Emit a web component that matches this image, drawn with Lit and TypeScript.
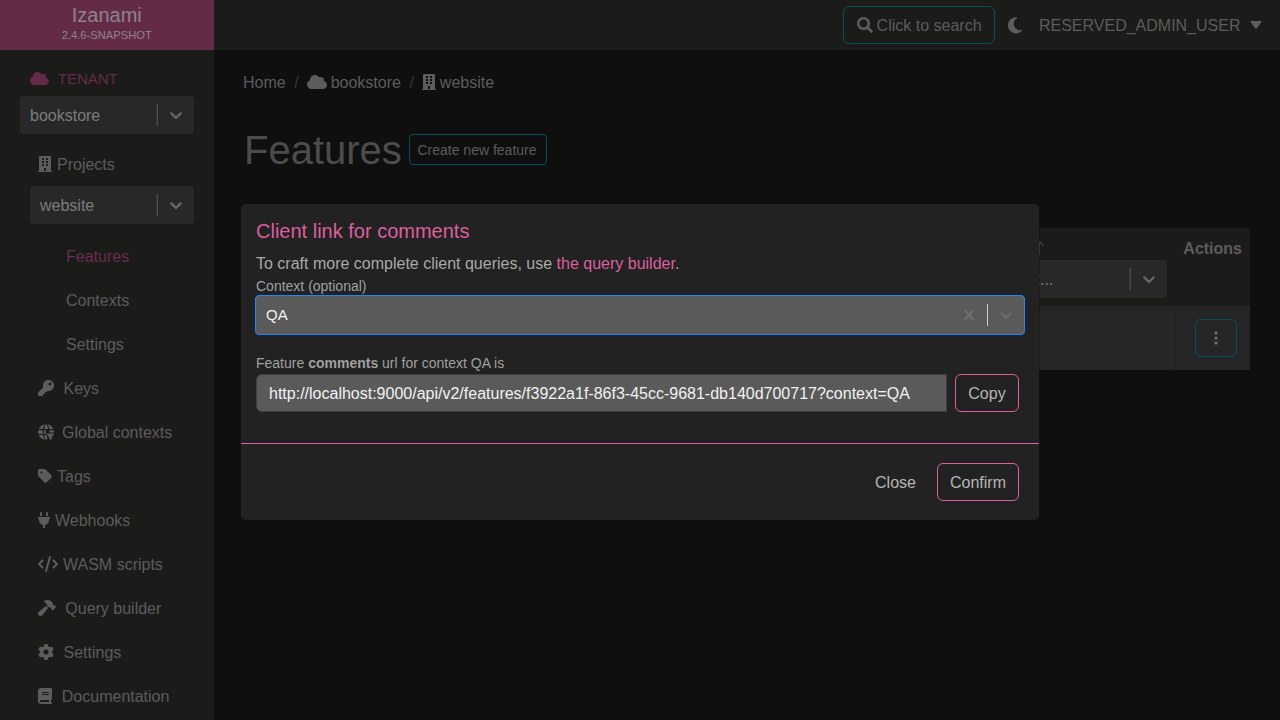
import { LitElement, html, css, svg } from "lit";
import { customElement, property } from "lit/decorators.js";

type Icon = { w: number; h: number; d: string };

const ICONS: Record<string, Icon> = {
  cloud: { w: 640, h: 512, d: "M0 336c0 79.5 64.5 144 144 144l368 0c70.7 0 128-57.3 128-128c0-61.9-44-113.6-102.4-125.4c4.1-10.7 6.4-22.4 6.4-34.6c0-53-43-96-96-96c-19.7 0-38.1 6-53.3 16.2C367 64.2 315.3 32 256 32C167.6 32 96 103.6 96 192c0 2.7 .1 5.4 .2 8.1C40.2 219.8 0 273.2 0 336z" },
  building: { w: 448, h: 512, d: "M436 480h-20V24c0-13.255-10.745-24-24-24H56C42.745 0 32 10.745 32 24v456H12c-6.627 0-12 5.373-12 12v20h448v-20c0-6.627-5.373-12-12-12zM128 76c0-6.627 5.373-12 12-12h40c6.627 0 12 5.373 12 12v40c0 6.627-5.373 12-12 12h-40c-6.627 0-12-5.373-12-12V76zm0 96c0-6.627 5.373-12 12-12h40c6.627 0 12 5.373 12 12v40c0 6.627-5.373 12-12 12h-40c-6.627 0-12-5.373-12-12v-40zm52 148h-40c-6.627 0-12-5.373-12-12v-40c0-6.627 5.373-12 12-12h40c6.627 0 12 5.373 12 12v40c0 6.627-5.373 12-12 12zm76 160h-64v-84c0-6.627 5.373-12 12-12h40c6.627 0 12 5.373 12 12v84zm64-172c0 6.627-5.373 12-12 12h-40c-6.627 0-12-5.373-12-12v-40c0-6.627 5.373-12 12-12h40c6.627 0 12 5.373 12 12v40zm0-96c0 6.627-5.373 12-12 12h-40c-6.627 0-12-5.373-12-12v-40c0-6.627 5.373-12 12-12h40c6.627 0 12 5.373 12 12v40zm0-96c0 6.627-5.373 12-12 12h-40c-6.627 0-12-5.373-12-12V76c0-6.627 5.373-12 12-12h40c6.627 0 12 5.373 12 12v40z" },
  key: { w: 512, h: 512, d: "M512 176.001C512 273.203 433.202 352 336 352c-11.22 0-22.19-1.062-32.827-3.069l-24.012 27.014A23.999 23.999 0 0 1 261.223 384H224v40c0 13.255-10.745 24-24 24h-40v40c0 13.255-10.745 24-24 24H24c-13.255 0-24-10.745-24-24v-78.059c0-6.365 2.529-12.47 7.029-16.971l161.802-161.802C163.108 213.814 160 195.271 160 176 160 78.798 238.797.001 335.999 0 433.488-.001 512 78.511 512 176.001zM336 128c0 26.51 21.49 48 48 48s48-21.49 48-48-21.49-48-48-48-48 21.49-48 48z" },
  tag: { w: 448, h: 512, d: "M0 80V229.5c0 17 6.7 33.3 18.7 45.3l176 176c25 25 65.5 25 90.5 0L418.7 317.3c25-25 25-65.5 0-90.5l-176-176c-12-12-28.3-18.7-45.3-18.7H48C21.5 32 0 53.5 0 80zm112 32a32 32 0 1 1 0 64 32 32 0 1 1 0-64z" },
  plug: { w: 384, h: 512, d: "M320,32a32,32,0,0,0-64,0v96h64Zm48,128H16A16,16,0,0,0,0,176v32a16,16,0,0,0,16,16H32v32A160.07,160.07,0,0,0,160,412.8V512h64V412.8A160.07,160.07,0,0,0,352,256V224h16a16,16,0,0,0,16-16V176A16,16,0,0,0,368,160ZM128,32a32,32,0,0,0-64,0v96h64Z" },
  code: { w: 640, h: 512, d: "M392.8 1.2c-17-4.9-34.7 5-39.6 22l-128 448c-4.9 17 5 34.7 22 39.6s34.7-5 39.6-22l128-448c4.9-17-5-34.7-22-39.6zm80.6 120.1c-12.5 12.5-12.5 32.8 0 45.3L562.7 256l-89.4 89.4c-12.5 12.5-12.5 32.8 0 45.3s32.8 12.5 45.3 0l112-112c12.5-12.5 12.5-32.8 0-45.3l-112-112c-12.5-12.5-32.8-12.5-45.3 0zm-306.7 0c-12.5-12.5-32.8-12.5-45.3 0l-112 112c-12.5 12.5-12.5 32.8 0 45.3l112 112c12.5 12.5 32.8 12.5 45.3 0s12.5-32.8 0-45.3L77.3 256l89.4-89.4c12.5-12.5 12.5-32.8 0-45.3z" },
  hammer: { w: 576, h: 512, d: "M413.5 237.5c-28.2 4.8-58.2-3.6-80-25.4l-38.1-38.1C280.4 159 272 138.8 272 117.6V105.5L192.3 62c-5.3-2.9-8.6-8.6-8.3-14.7s3.9-11.5 9.5-14l47.2-21C259.1 4.2 279 0 299.2 0h18.1c36.7 0 72 14 98.7 39.1l44.6 42c24.2 22.8 33.2 55.7 26.6 86L503 183l8-8c9.4-9.4 24.6-9.4 33.9 0l24 24c9.4 9.4 9.4 24.6 0 33.9l-88 88c-9.4 9.4-24.6 9.4-33.9 0l-24-24c-9.4-9.4-9.4-24.6 0-33.9l8-8-17.5-17.5zM27.4 377.1L260.9 182.6c3.5 4.9 7.5 9.6 11.8 14l38.1 38.1c6 6 12.4 11.2 19.2 15.7L134.9 484.6c-14.5 17.4-36 27.4-58.6 27.4C34.1 512 0 477.8 0 435.7c0-22.6 10.1-44.1 27.4-58.6z" },
  gear: { w: 512, h: 512, d: "M495.9 166.6c3.2 8.7 .5 18.4-6.4 24.6l-43.3 39.4c1.1 8.3 1.7 16.8 1.7 25.4s-.6 17.1-1.7 25.4l43.3 39.4c6.9 6.2 9.6 15.9 6.4 24.6c-4.4 11.9-9.7 23.3-15.8 34.3l-4.7 8.1c-6.6 11-14 21.4-22.1 31.2c-5.9 7.2-15.7 9.6-24.5 6.8l-55.7-17.7c-13.4 10.3-28.2 18.9-44 25.4l-12.5 57.1c-2 9.1-9 16.3-18.2 17.8c-13.8 2.3-28 3.5-42.5 3.5s-28.7-1.2-42.5-3.5c-9.2-1.5-16.2-8.7-18.2-17.8l-12.5-57.1c-15.8-6.5-30.6-15.1-44-25.4L83.1 425.9c-8.8 2.8-18.6 .3-24.5-6.8c-8.1-9.8-15.5-20.2-22.1-31.2l-4.7-8.1c-6.1-11-11.4-22.4-15.8-34.3c-3.2-8.7-.5-18.4 6.4-24.6l43.3-39.4C64.6 273.1 64 264.6 64 256s.6-17.1 1.7-25.4L22.4 191.2c-6.9-6.2-9.6-15.9-6.4-24.6c4.4-11.9 9.7-23.3 15.8-34.3l4.7-8.1c6.6-11 14-21.4 22.1-31.2c5.9-7.2 15.7-9.6 24.5-6.8l55.7 17.7c13.4-10.3 28.2-18.9 44-25.4l12.5-57.1c2-9.1 9-16.3 18.2-17.8C227.3 1.2 241.5 0 256 0s28.7 1.2 42.5 3.5c9.2 1.5 16.2 8.7 18.2 17.8l12.5 57.1c15.8 6.5 30.6 15.1 44 25.4l55.7-17.7c8.8-2.8 18.6-.3 24.5 6.8c8.1 9.8 15.5 20.2 22.1 31.2l4.7 8.1c6.1 11 11.4 22.4 15.8 34.3zM256 336a80 80 0 1 0 0-160 80 80 0 1 0 0 160z" },
  book: { w: 448, h: 512, d: "M96 0C43 0 0 43 0 96V416c0 53 43 96 96 96H384h32c17.7 0 32-14.3 32-32s-14.3-32-32-32V384c17.7 0 32-14.3 32-32V32c0-17.7-14.3-32-32-32H384 96zm0 384H352v64H96c-17.7 0-32-14.3-32-32s14.3-32 32-32zm32-240c0-8.8 7.2-16 16-16H336c8.8 0 16 7.2 16 16s-7.2 16-16 16H144c-8.8 0-16-7.2-16-16zm16 48H336c8.8 0 16 7.2 16 16s-7.2 16-16 16H144c-8.8 0-16-7.2-16-16s7.2-16 16-16z" },
  search: { w: 512, h: 512, d: "M505 442.7L405.3 343c-4.5-4.5-10.6-7-17-7H372c27.6-35.3 44-79.7 44-128C416 93.1 322.9 0 208 0S0 93.1 0 208s93.1 208 208 208c48.3 0 92.7-16.4 128-44v16.3c0 6.4 2.5 12.5 7 17l99.7 99.7c9.4 9.4 24.6 9.4 33.9 0l28.3-28.3c9.4-9.4 9.4-24.6.1-34zM208 336c-70.7 0-128-57.2-128-128 0-70.7 57.2-128 128-128 70.7 0 128 57.2 128 128 0 70.7-57.2 128-128 128z" },
  moon: { w: 384, h: 512, d: "M223.5 32C100 32 0 132.3 0 256S100 480 223.5 480c60.6 0 115.5-24.2 155.8-63.4c5-4.9 6.3-12.5 3.1-18.7s-10.1-9.7-17-8.5c-9.8 1.7-19.8 2.6-30.1 2.6c-96.9 0-175.5-78.8-175.5-176c0-65.8 36-123.1 89.3-153.3c6.1-3.5 9.2-10.5 7.7-17.3s-7.3-11.9-14.3-12.5c-6.3-.5-12.6-.8-19-.8z" },
  chevron: { w: 20, h: 20, d: "M4.516 7.548c0.436-0.446 1.043-0.481 1.576 0l3.908 3.747 3.908-3.747c0.533-0.481 1.141-0.446 1.574 0 0.436 0.445 0.408 1.197 0 1.615-0.406 0.418-4.695 4.502-4.695 4.502-0.217 0.223-0.502 0.335-0.787 0.335s-0.57-0.112-0.789-0.335c0 0-4.287-4.084-4.695-4.502s-0.436-1.17 0-1.615z" },
  cross: { w: 20, h: 20, d: "M14.348 14.849c-0.469 0.469-1.229 0.469-1.697 0l-2.651-3.030-2.651 3.029c-0.469 0.469-1.229 0.469-1.697 0-0.469-0.469-0.469-1.229 0-1.697l2.758-3.15-2.759-3.152c-0.469-0.469-0.469-1.228 0-1.697s1.228-0.469 1.697 0l2.652 3.031 2.651-3.031c0.469-0.469 1.228-0.469 1.697 0s0.469 1.229 0 1.697l-2.758 3.152 2.758 3.15c0.469 0.469 0.469 1.229 0 1.698z" },
  dots: { w: 16, h: 16, d: "M9.5 13a1.5 1.5 0 1 1-3 0 1.5 1.5 0 0 1 3 0m0-5a1.5 1.5 0 1 1-3 0 1.5 1.5 0 0 1 3 0m0-5a1.5 1.5 0 1 1-3 0 1.5 1.5 0 0 1 3 0" },
  caret: { w: 12, h: 8, d: "M1 0H11Q12.4 0 11.4 1.2L7 7Q6 8.2 5 7L.6 1.2Q-.4 0 1 0z" },
};

@customElement("ui-icon")
class UiIcon extends LitElement {
  @property() name = "";
  @property({ type: Number }) size = 16;

  static styles = css`
    :host { display: inline-flex; flex: none; }
    svg { display: block; fill: currentColor; }
  `;

  render() {
    if (this.name === "globe") {
      return html`<svg width="16" height="16" viewBox="0 0 16 16">
        ${svg`<path d="M5 5.1C5.4 2.7 6.2.9 7.2.3 4.3.6 1.9 2.3.8 5.1zM6.2 5.1h3.9C9.8 2.4 9 .4 8.1.4S6.5 2.4 6.2 5.1zM11.3 5.1h4C14.3 2.5 12.2.7 9.5.3c.9 1 1.5 2.700 1.800 4.800zM.4 6.200C.1 7.400.1 8.700.4 9.900h4.400c-.1-1.200-.1-2.500 0-3.700zM6 6.200c-.1 1.300-.1 2.500 0 3.700h1.700V7.600c0-.7.4-1.200 1-1.400zM.8 11.100c1.100 2.600 3.300 4.300 6.300 4.700-1-1-1.700-2.600-2.100-4.700zM6.200 11.100c.3 2.600 1.100 4.700 2 4.700.5 0 .9-.6 1.200-1.500L8.500 11.100zM11.500 6.200c.1.800.1 1.500.1 2.200h4.200c.1-.8 0-1.500-.2-2.200zM9 9.600h6.500q.8.100.4.900L13.700 13v2.400q-.3.700-.9.300L11 14.200V13L8.800 10.500Q8.400 9.800 9 9.600z"/>`}
      </svg>`;
    }
    const i = ICONS[this.name];
    if (!i) return html``;
    return html`<svg width=${(this.size * i.w) / i.h} height=${this.size} viewBox="0 0 ${i.w} ${i.h}">${svg`<path d=${i.d}/>`}</svg>`;
  }
}

@customElement("ui-select")
class UiSelect extends LitElement {
  @property() value = "";
  @property({ type: Boolean, reflect: true }) focused = false;

  static styles = css`
    :host {
      display: flex; align-items: center; box-sizing: border-box; height: 38px;
      border-radius: 4px; background: #282828; color: #7c7c7c; font-size: 16px;
    }
    .value { flex: 1; padding: 2px 10px 0; white-space: nowrap; }
    .bar { width: 1px; height: 22px; flex: none; background: #4c4c4c; margin-right: 8px; box-shadow: -1px 0 0 #363636; }
    .chev { margin-right: 8px; color: #666; display: flex; }
    .clear { display: none; }
    :host([focused]) {
      height: 40px; border: 1px solid #2684ff; background: #5a5a5a; color: #f2f2f2; font-size: 15px;
    }
    :host([focused]) .value { padding-top: 0; }
    :host([focused]) .bar { background: #ccc; box-shadow: none; }
    :host([focused]) .chev { color: #6b6b6b; }
    :host([focused]) .clear { display: flex; color: #6e6e6e; margin-right: 8px; }
  `;

  render() {
    return html`
      <span class="value">${this.value}</span>
      <span class="clear"><ui-icon name="cross" size="20"></ui-icon></span>
      <span class="bar"></span>
      <span class="chev"><ui-icon name="chevron" size="20"></ui-icon></span>
    `;
  }
}

const MENU: [string, string, number][] = [
  ["key", "Keys", 9.5],
  ["globe", "Global contexts", 8],
  ["tag", "Tags", 5],
  ["plug", "Webhooks", 5],
  ["code", "WASM scripts", 5],
  ["hammer", "Query builder", 9.3],
  ["gear", "Settings", 9.5],
  ["book", "Documentation", 9.8],
];

@customElement("app-root")
class AppRoot extends LitElement {
  static styles = css`
    :host {
      display: block; position: relative; width: 1280px; height: 720px; overflow: hidden;
      background: #0f0f0f; color: #5c5c5c;
      font-family: "Liberation Sans", Arial, Helvetica, sans-serif; font-size: 16px; line-height: 24px;
    }
    * { box-sizing: border-box; }
    .page { display: grid; grid-template-columns: 213.5px 1fr; grid-template-rows: 50px 670px; }
    .brand { background: #642b49; color: #8d848b; text-align: center; }
    .brand-name { font-size: 20px; line-height: 24px; padding-top: 3px; }
    .brand-version { font-size: 11.2px; line-height: 14px; padding-top: 1px; }
    .top { background: #1b1b19; display: flex; align-items: center; justify-content: flex-end; padding-right: 18px; }
    .search {
      height: 38px; width: 152px; border: 1px solid #064e59; border-radius: 6px; display: flex;
      align-items: center; justify-content: center; gap: 4px; margin-right: 13px;
    }
    .low { padding-top: 2px; }
    .user { margin: 0 9.5px 0 17px; padding-top: 2px; }
    .side { background: #1b1b19; display: flex; flex-direction: column; }
    .tenant { display: flex; align-items: center; gap: 9px; margin: 17px 0 6px 30px; height: 23px; color: #642b49; font-size: 15px; }
    .tenant-select { margin: 0 20px 0 20px; }
    .project-select { margin: 0 20px 10px 30px; }
    .projects { display: flex; align-items: center; gap: 5px; height: 30px; margin: 15px 0 7px 38px; }
    .item { height: 44px; display: flex; align-items: center; padding-left: 38px; }
    .sub { padding-left: 66px; }
    .active { color: #6b2c4d; }
    .main { padding: 21px 30px 0 29.5px; }
    .crumbs { display: flex; align-items: center; height: 24px; gap: 8px; }
    .crumb { display: flex; align-items: center; gap: 4px; }
    .crumb ui-icon { margin-top: -2px; }
    .slash { color: #34383c; padding-left: .5px; }
    .heading { display: flex; align-items: center; height: 48px; margin-top: 31px; }
    h1 { font-size: 40px; line-height: 48px; font-weight: 400; margin: 0; color: #4c4c4c; width: 165.5px; padding-left: 1px; }
    .create {
      width: 138px; height: 31px; border: 1px solid #064e59; border-radius: 4px; font-size: 14px;
      display: flex; align-items: center; justify-content: center; margin-top: -1px; padding-right: 1px;
    }
    .table { margin-top: 54px; }
    .thead { height: 78px; background: #1b1b19; display: flex; justify-content: flex-end; }
    .filter-col { width: 240px; padding: 8px 8px 0 0; }
    .sort { height: 24px; padding-left: 98px; }
    .arrow { display: block; fill: none; stroke: #595959; }
    .filter-box { padding-left: 50.5px; }
    .actions { width: 75px; padding: 9px 8px 0 0; text-align: right; font-weight: 700; }
    .trow { height: 64px; background: #262626; display: flex; justify-content: flex-end; }
    .kebab-cell { width: 75px; border-left: 1px solid #222; display: flex; align-items: center; padding-left: 19px; }
    .kebab { width: 42px; height: 38px; border: 1px solid #064e59; border-radius: 6px; display: flex; align-items: center; justify-content: center; color: #757575; }
    .modal {
      position: absolute; left: 241px; top: 204px; width: 798px; height: 316px; background: #222;
      border-radius: 5px; box-shadow: 0 0 0 1px rgba(20, 20, 20, .5); color: #a9a9a9; display: flex; flex-direction: column;
    }
    .content { height: 239px; padding: 15px 15px 0; }
    .title { font-size: 20px; line-height: 24px; color: #dc5f9f; }
    .lead { margin-top: 9px; height: 24px; }
    .link { color: #dc5f9f; }
    .label { font-size: 14px; line-height: 20px; color: #a0a0a0; }
    .context { margin: -1px -1px 0; }
    .url-label { margin-top: 18px; }
    .url-row { display: flex; align-items: center; margin-top: 1px; gap: 8px; padding-right: 5px; }
    .url { flex: 1; height: 38px; border: 1px solid #404040; border-radius: 6px 0 0 6px; background: #5a5a5a; color: #f2f2f2; display: flex; align-items: center; padding: 2px 0 0 12px; }
    .btn { height: 38px; display: flex; align-items: center; justify-content: center; border: 1px solid #dc5f9f; border-radius: 6px; color: #b5b5b5; padding-top: 2px; }
    .copy { width: 64px; }
    .confirm { width: 82px; }
    .close { width: 67px; border-color: transparent; }
    .footer { height: 77px; border-top: 1px solid #dc5f9f; display: flex; justify-content: flex-end; gap: 8px; padding: 19px 20px 0 0; }
  `;

  render() {
    return html`
      <div class="page">
        <div class="brand">
          <div class="brand-name">Izanami</div>
          <div class="brand-version">2.4.6-SNAPSHOT</div>
        </div>
        <header class="top">
          <div class="search"><ui-icon name="search"></ui-icon><span class="low">Click to search</span></div>
          <ui-icon name="moon" size="18.5"></ui-icon>
          <span class="user">RESERVED_ADMIN_USER</span>
          <ui-icon name="caret" size="8"></ui-icon>
        </header>
        <nav class="side">
          <div class="tenant"><ui-icon name="cloud" size="15"></ui-icon><span>TENANT</span></div>
          <ui-select class="tenant-select" value="bookstore"></ui-select>
          <div class="projects"><ui-icon name="building"></ui-icon><span class="low">Projects</span></div>
          <ui-select class="project-select" value="website"></ui-select>
          <div class="item sub active"><span class="low">Features</span></div>
          <div class="item sub"><span class="low">Contexts</span></div>
          <div class="item sub"><span class="low">Settings</span></div>
          ${MENU.map(([icon, label, gap]) => html`
            <div class="item" style="gap:${gap}px"><ui-icon name=${icon}></ui-icon><span class="low">${label}</span></div>`)}
        </nav>
        <main class="main">
          <div class="crumbs">
            <span>Home</span><span class="slash">/</span>
            <span class="crumb"><ui-icon name="cloud"></ui-icon>bookstore</span><span class="slash">/</span>
            <span class="crumb"><ui-icon name="building"></ui-icon>website</span>
          </div>
          <div class="heading"><h1>Features</h1><div class="create">Create new feature</div></div>
          <div class="table">
            <div class="thead">
              <div class="filter-col">
                <div class="sort"><svg class="arrow" width="12" height="20" viewBox="0 0 12 20"><path d="M6.5 5.5V19M2.5 9.5L6.5 5.5L10.5 9.5"/></svg></div>
                <div class="filter-box"><ui-select value="Select..."></ui-select></div>
              </div>
              <div class="actions">Actions</div>
            </div>
            <div class="trow">
              <div class="kebab-cell"><div class="kebab"><ui-icon name="dots"></ui-icon></div></div>
            </div>
          </div>
        </main>
      </div>
      <section class="modal">
        <div class="content">
          <div class="title">Client link for comments</div>
          <div class="lead">To craft more complete client queries, use <span class="link">the query builder</span>.</div>
          <div class="label">Context (optional)</div>
          <ui-select class="context" focused value="QA"></ui-select>
          <div class="label url-label">Feature <b>comments</b> url for context QA is</div>
          <div class="url-row">
            <div class="url">http://localhost:9000/api/v2/features/f3922a1f-86f3-45cc-9681-db140d700717?context=QA</div>
            <div class="btn copy">Copy</div>
          </div>
        </div>
        <div class="footer">
          <div class="btn close">Close</div>
          <div class="btn confirm">Confirm</div>
        </div>
      </section>
    `;
  }
}
